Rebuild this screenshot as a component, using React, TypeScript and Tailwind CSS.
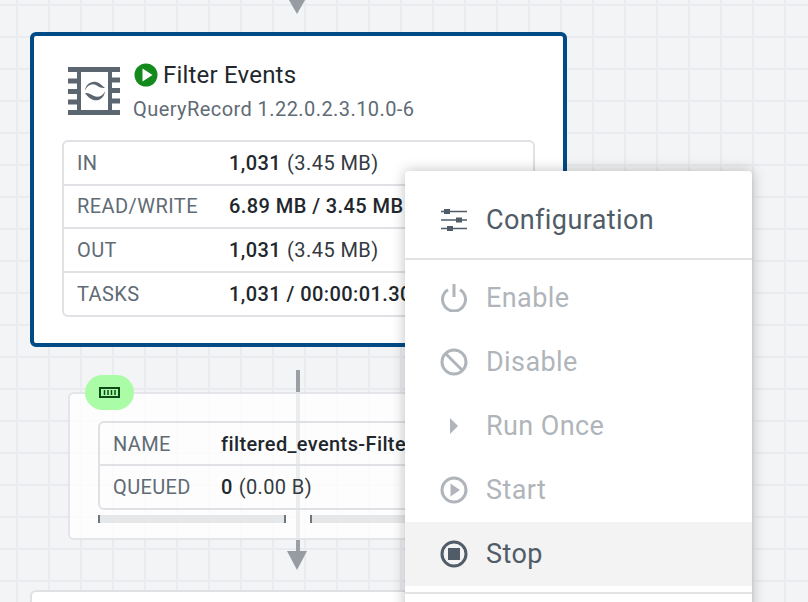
const font = { fontFamily: 'Roboto, "Liberation Sans", sans-serif' };

function ProcessorIcon() {
  return (
    <svg width="52" height="48" viewBox="0 0 52 48" className="shrink-0">
      <path
        fill="#5b6670"
        fillRule="evenodd"
        d="M0 0h52v5h-8v5.500h8v5h-8v5.500h8v5h-8v5.500h8v5h-8V43h8v5H0v-5h9v-5.500H0v-5h9V27H0v-5h9v-5.500H0v-5h9V5H0zM13 5v38h27V5z"
      />
      <path fill="#5b6670" d="M17 23.500c.6-6 6-10 11.500-8.500 3.500 1 5.500 3.500 8.500 6-3.500.5-6-1-9-3-4-2-8.500 0-11 5.500z" />
      <path fill="#5b6670" d="M37 24.500c-.6 6-6 10-11.500 8.500-3.500-1-6-3.500-8.500-7 3.500-.5 6 1.500 9 3 4 2 8.500 0 11-4.500z" />
    </svg>
  );
}

function PlayBadge() {
  return (
    <svg width="24" height="24" viewBox="0 0 24 24" className="shrink-0">
      <circle cx="12" cy="12" r="11.500" fill="#158a1c" />
      <path d="M8.500 5.500 18.500 12 8.500 18.500z" fill="#fff" />
    </svg>
  );
}

function Row({ label, value, rest, last }: { label: string; value: string; rest?: string; last?: boolean }) {
  return (
    <div className={`flex items-center whitespace-nowrap pl-[13px] ${last ? "h-[42.5px]" : "h-[43.5px] border-b-2 border-[#dfe1e4]"}`}>
      <span className="w-[152px] shrink-0 text-[#5f6b75]">{label}</span>
      <span className="font-medium text-[#21272c]">{value}</span>
      {rest && <span className="ml-[6px] text-[#333a40]">{rest}</span>}
    </div>
  );
}

function MenuItem({ icon, label, muted, active }: { icon: React.ReactNode; label: string; muted?: boolean; active?: boolean }) {
  return (
    <div className={`flex h-[64px] items-center ${active ? "bg-[#f3f3f4]" : ""} ${muted ? "text-[#afb5ba]" : "text-[#505c67]"}`}>
      <div className="flex w-[81px] shrink-0 justify-center pl-[16px]">{icon}</div>
      <span className="text-[27px] tracking-[0.4px]">{label}</span>
    </div>
  );
}

const ic = { width: 28, height: 28, viewBox: "0 0 28 28", fill: "none", stroke: "currentColor", strokeWidth: 3 };

export default function App() {
  return (
    <div
      style={font}
      className="relative h-[602px] w-[808px] overflow-hidden bg-[#f3f4f6] bg-[linear-gradient(to_right,#e9ebee_2px,transparent_2px),linear-gradient(to_bottom,#e9ebee_2px,transparent_2px)] bg-[length:32px_32px] bg-[position:16px_4px]"
    >
      {/* connector above */}
      <svg width="16" height="14" viewBox="0 0 16 14" className="absolute left-[289px] top-0">
        <path d="M0 0h16L8 14z" fill="#969ca2" />
      </svg>

      {/* connector below */}
      <div className="absolute left-[296px] top-[370px] h-[182px] w-[4px] bg-[#9a9fa5]" />
      <svg width="20" height="19" viewBox="0 0 20 19" className="absolute left-[287px] top-[551px]">
        <path d="M0 0h20L10 19z" fill="#969ca2" />
      </svg>

      {/* processor node */}
      <div className="absolute left-[30px] top-[32px] h-[315px] w-[537px] rounded-[6px] border-4 border-[#004a85] bg-white px-[28px] pt-[31px] tracking-[0.43px]">
        <div className="flex gap-[13px] pl-[6px]">
          <ProcessorIcon />
          <div className="-mt-[7px]">
            <div className="flex items-center gap-[5px] pl-[1px]">
              <PlayBadge />
              <span className="text-[24px] leading-[30px] tracking-[0.2px] text-[#21272c]">Filter Events</span>
            </div>
            <div className="pt-[4px] text-[20px] leading-[30px] text-[#5f6b75]">QueryRecord 1.22.0.2.3.10.0-6</div>
          </div>
        </div>
        <div className="mt-[16px] overflow-hidden rounded-[6px] border-2 border-[#dfe1e4] text-[20px]">
          <Row label="IN" value="1,031" rest="(3.45 MB)" />
          <Row label="READ/WRITE" value="6.89 MB / 3.45 MB" />
          <Row label="OUT" value="1,031" rest="(3.45 MB)" />
          <Row label="TASKS" value="1,031 / 00:00:01.305" last />
        </div>
      </div>

      {/* connection node */}
      <div className="absolute left-[68px] top-[392px] h-[148px] w-[500px] rounded-[6px] border-2 border-[#e3e5e8] bg-white/80 pl-[28px] pt-[27px] tracking-[0.38px]">
        <div className="overflow-hidden rounded-[6px] border-2 border-[#dfe1e4] text-[20px]">
          <div className="flex h-[43px] items-center whitespace-nowrap border-b-2 border-[#dfe1e4] pl-[13px]">
            <span className="w-[108px] shrink-0 text-[#5f6b75]">NAME</span>
            <span className="font-medium text-[#21272c]">filtered_events-Filter</span>
          </div>
          <div className="flex h-[42px] items-center whitespace-nowrap pl-[13px]">
            <span className="w-[108px] shrink-0 text-[#5f6b75]">QUEUED</span>
            <span className="font-medium text-[#21272c]">0</span>
            <span className="ml-[6px] text-[#333a40]">(0.00 B)</span>
          </div>
        </div>
        <div className="mt-[5px] flex gap-[24px]">
          <div className="h-[8px] w-[188px] border-x-2 border-[#6e757c] bg-[#e6e7e9]" />
          <div className="h-[8px] w-[186px] border-l-2 border-[#6e757c] bg-[#e6e7e9]" />
        </div>
      </div>

      {/* connection badge */}
      <div className="absolute left-[85px] top-[375px] flex h-[35px] w-[49px] items-center justify-center rounded-full bg-[#abfca6]">
        <svg width="21" height="11" viewBox="0 0 21 11">
          <rect x="1" y="1" width="19" height="9" fill="none" stroke="#0d4a18" strokeWidth="2" />
          <path d="M5.500 3v5M9 3v5M12.500 3v5M16 3v5" stroke="#0d4a18" strokeWidth="1.500" />
        </svg>
      </div>

      {/* node below */}
      <div className="absolute left-[30px] top-[590px] h-[40px] w-[500px] rounded-[6px] border-2 border-[#dfe1e4] bg-white" />

      {/* context menu */}
      <div className="absolute left-[405px] top-[171px] w-[347px] rounded-[4px] bg-white shadow-[0_0_14px_rgba(0,0,0,0.25)]">
        <div className="flex h-[89px] items-center border-b-2 border-[#e2e3e5] pt-[11px] text-[#505c67]">
          <div className="flex w-[81px] shrink-0 justify-center pl-[16px]">
            <svg width="28" height="24" viewBox="0 0 28 24">
              <path d="M1 3.500h26M1 12h26M1 20.500h26" stroke="currentColor" strokeWidth="1.500" />
              <rect x="4" y="1" width="6" height="5" fill="currentColor" />
              <rect x="16" y="9.500" width="6" height="5" fill="currentColor" />
              <rect x="7" y="18" width="6" height="5" fill="currentColor" />
            </svg>
          </div>
          <span className="text-[27px] tracking-[0.4px]">Configuration</span>
        </div>
        <div className="pt-[6px]">
          <MenuItem
            muted
            label="Enable"
            icon={
              <svg {...ic}>
                <path d="M8 5.800a11.500 11.500 0 1 0 12 0" />
                <path d="M14 0v13" />
              </svg>
            }
          />
          <MenuItem
            muted
            label="Disable"
            icon={
              <svg {...ic}>
                <circle cx="14" cy="14" r="12" />
                <path d="M5.500 5.500l17 17" />
              </svg>
            }
          />
          <MenuItem
            muted
            label="Run Once"
            icon={
              <svg width="28" height="28" viewBox="0 0 28 28">
                <path d="M10 6l8 8-8 8z" fill="currentColor" />
              </svg>
            }
          />
          <MenuItem
            muted
            label="Start"
            icon={
              <svg {...ic}>
                <circle cx="14" cy="14" r="12" />
                <path d="M10.500 7.500 20 14l-9.500 6.500z" fill="currentColor" stroke="none" />
              </svg>
            }
          />
          <MenuItem
            active
            label="Stop"
            icon={
              <svg {...ic}>
                <circle cx="14" cy="14" r="12" />
                <rect x="8" y="8" width="12" height="12" fill="currentColor" stroke="none" />
              </svg>
            }
          />
        </div>
        <div className="mt-[6px] h-[60px] border-t-2 border-[#e2e3e5]" />
      </div>
    </div>
  );
}
